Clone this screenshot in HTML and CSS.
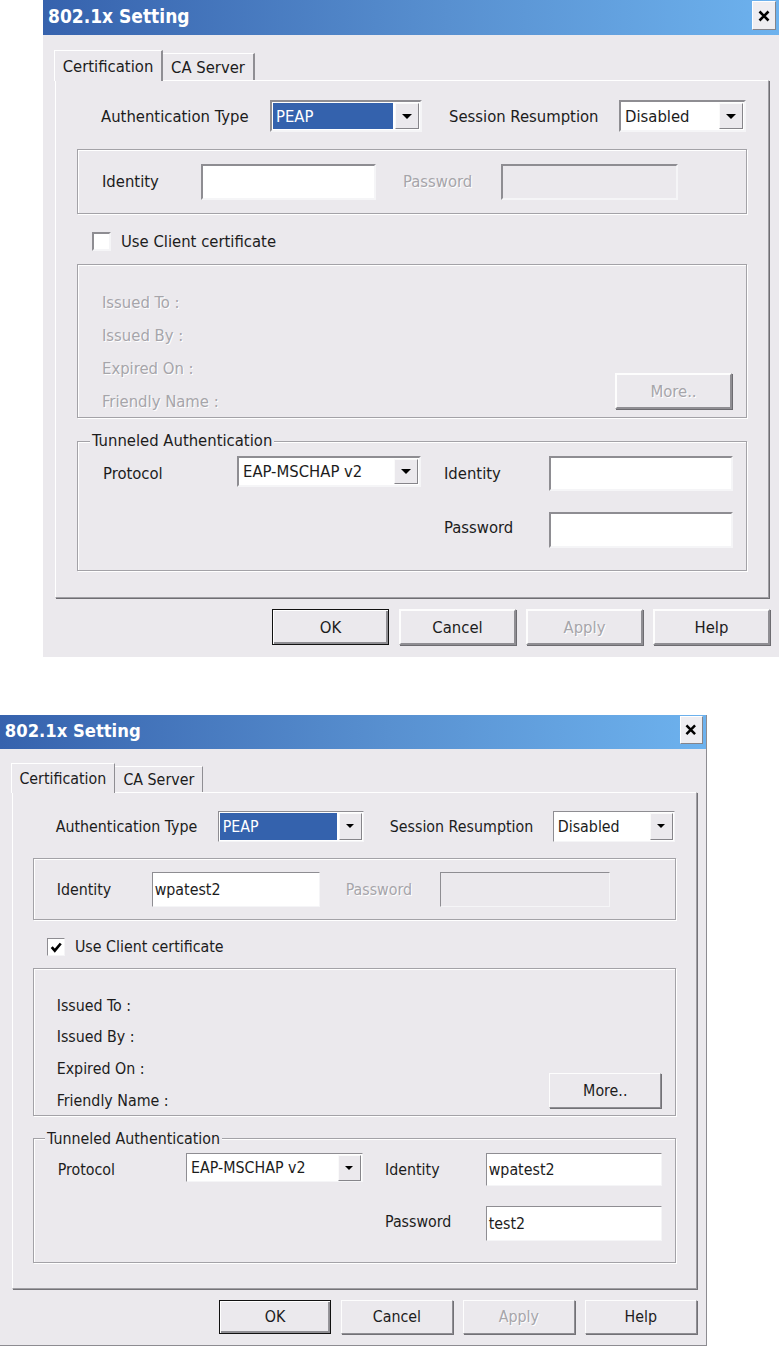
FILE: index.html
```html
<!DOCTYPE html>
<html lang="en">
  <head>
    <meta charset="UTF-8" />
    <meta name="viewport" content="width=device-width, initial-scale=1.0" />
    <title>802.1x Setting</title>
    <link rel="stylesheet" href="styles.css">
  </head>
  <body>
    <!-- first capture: empty form -->
    <div class="shot shot-top">
      <div class="dialog">
        <div class="titlebar">
          <span class="title">802.1x Setting</span>
          <span class="close">
            <svg width="12" height="12" viewBox="0 0 12 12"><path d="M1.5 1.5 L10.5 10.5 M10.5 1.5 L1.5 10.5" stroke="#000" stroke-width="2.6" /></svg>
          </span>
        </div>
        <div class="tabs">
          <div class="tab tab-active">Certification</div>
          <div class="tab">CA Server</div>
        </div>
        <div class="panel">
          <div class="row-auth">
            <span class="lbl-auth">Authentication Type</span>
            <div class="select select-peap">
              <span class="select-value select-value-hl">PEAP</span>
              <span class="select-btn"></span>
            </div>
            <span class="lbl-session">Session Resumption</span>
            <div class="select select-session">
              <span class="select-value">Disabled</span>
              <span class="select-btn"></span>
            </div>
          </div>

          <div class="group group-identity">
            <span class="lbl-identity">Identity</span>
            <div class="field field-identity"></div>
            <span class="lbl-password disabled">Password</span>
            <div class="field field-password field-disabled"></div>
          </div>

          <div class="check-row">
            <span class="checkbox"></span>
            <span>Use Client certificate</span>
          </div>

          <div class="group group-cert">
            <span class="cert-label disabled">Issued To :</span>
            <span class="cert-label disabled">Issued By :</span>
            <span class="cert-label disabled">Expired On :</span>
            <span class="cert-label disabled">Friendly Name :</span>
            <span class="btn btn-more disabled">More..</span>
          </div>

          <fieldset class="group group-tunnel">
            <legend>Tunneled Authentication</legend>
            <div class="tunnel-grid">
              <span>Protocol</span>
              <div class="select select-protocol">
                <span class="select-value">EAP-MSCHAP v2</span>
                <span class="select-btn"></span>
              </div>
              <span>Identity</span>
              <div class="field field-tunnel"></div>
              <span></span>
              <span></span>
              <span class="lbl-row2">Password</span>
              <div class="field field-tunnel field-tall"></div>
            </div>
          </fieldset>
        </div>
        <div class="buttons">
          <span class="btn btn-default">OK</span>
          <span class="btn">Cancel</span>
          <span class="btn disabled">Apply</span>
          <span class="btn">Help</span>
        </div>
      </div>
    </div>

    <!-- second capture: filled in -->
    <div class="shot shot-bottom">
      <div class="dialog dialog-small">
        <div class="titlebar">
          <span class="title">802.1x Setting</span>
          <span class="close">
            <svg width="12" height="12" viewBox="0 0 12 12"><path d="M1.5 1.5 L10.5 10.5 M10.5 1.5 L1.5 10.5" stroke="#000" stroke-width="2.6" /></svg>
          </span>
        </div>
        <div class="tabs">
          <div class="tab tab-active">Certification</div>
          <div class="tab">CA Server</div>
        </div>
        <div class="panel">
          <div class="row-auth">
            <span class="lbl-auth">Authentication Type</span>
            <div class="select select-peap">
              <span class="select-value select-value-hl">PEAP</span>
              <span class="select-btn"></span>
            </div>
            <span class="lbl-session">Session Resumption</span>
            <div class="select select-session">
              <span class="select-value">Disabled</span>
              <span class="select-btn"></span>
            </div>
          </div>

          <div class="group group-identity">
            <span class="lbl-identity">Identity</span>
            <div class="field field-identity">wpatest2</div>
            <span class="lbl-password disabled">Password</span>
            <div class="field field-password field-disabled"></div>
          </div>

          <div class="check-row">
            <span class="checkbox">
              <svg width="13" height="13" viewBox="0 0 13 13"><path d="M1.8 6.3 L5 10 L11.2 2.6" fill="none" stroke="#000" stroke-width="2.8" /></svg>
            </span>
            <span>Use Client certificate</span>
          </div>

          <div class="group group-cert">
            <span class="cert-label">Issued To :</span>
            <span class="cert-label">Issued By :</span>
            <span class="cert-label">Expired On :</span>
            <span class="cert-label">Friendly Name :</span>
            <span class="btn btn-more">More..</span>
          </div>

          <fieldset class="group group-tunnel">
            <legend>Tunneled Authentication</legend>
            <div class="tunnel-grid">
              <span>Protocol</span>
              <div class="select select-protocol">
                <span class="select-value">EAP-MSCHAP v2</span>
                <span class="select-btn"></span>
              </div>
              <span>Identity</span>
              <div class="field field-tunnel">wpatest2</div>
              <span></span>
              <span></span>
              <span class="lbl-row2">Password</span>
              <div class="field field-tunnel field-tall">test2</div>
            </div>
          </fieldset>
        </div>
        <div class="buttons">
          <span class="btn btn-default">OK</span>
          <span class="btn">Cancel</span>
          <span class="btn disabled">Apply</span>
          <span class="btn">Help</span>
        </div>
      </div>
    </div>
  </body>
</html>
```

FILE: styles.css
```css
/* 802.1x dialog, two captures of the same window */
html {
  overflow: hidden;
}

body {
  margin: 0;
  background: #fff;
  font-family: "DejaVu Sans Condensed", "DejaVu Sans", sans-serif;
  font-stretch: condensed;
  font-size: 16.5px;
  color: #1c1c1c;
}

.shot {
  display: flex;
}

.shot-top {
  padding-left: 43px;
}

.shot-bottom {
  padding-top: 58px;
}

.dialog {
  width: 736px;
  height: 657px;
  box-sizing: border-box;
  background: #ebe9ed;
  display: flex;
  flex-direction: column;
}

/* second capture is a bit smaller */
.dialog-small {
  zoom: 0.96;
  border-right: 2px solid #8d8c91;
  border-bottom: 2px solid #8d8c91;
}

/* title bar */
.titlebar {
  height: 35px;
  flex: none;
  display: flex;
  justify-content: space-between;
  align-items: flex-start;
  background: linear-gradient(to right, #3662ad, #5890d0 55%, #6db2ee);
}

.title {
  color: #fff;
  font-weight: bold;
  font-size: 19px;
  line-height: 33px;
  padding-left: 5px;
}

.close {
  width: 24px;
  height: 29px;
  margin: 1px 3px 0 0;
  box-sizing: border-box;
  background: #eeedf1;
  border: 1px solid;
  border-color: #fff #85848a #85848a #fff;
  display: flex;
  align-items: center;
  justify-content: center;
}

/* tabs */
.tabs {
  display: flex;
  align-items: flex-end;
  height: 30px;
  margin-top: 15px;
  padding-left: 11px;
  position: relative;
  z-index: 1;
}

.tab {
  width: 92px;
  height: 27px;
  box-sizing: border-box;
  border-top: 1px solid #fff;
  border-right: 2px solid #8f8e93;
  display: flex;
  align-items: center;
  justify-content: center;
  background: #ebe9ed;
  white-space: nowrap;
}

.tab-active {
  width: 109px;
  height: 31px;
  margin-bottom: -1px;
  border-left: 1px solid #fff;
}

.panel {
  margin-left: 12px;
  width: 714px;
  height: 518px;
  flex: none;
  box-sizing: border-box;
  border: 1px solid;
  border-color: #fff #a09fa4 #a09fa4 #fff;
  box-shadow: 1px 1px 0 #6f6e73;
}

/* first row */
.row-auth {
  display: flex;
  align-items: center;
  height: 32px;
  margin: 19px 0 0 45px;
}

.lbl-auth {
  width: 169px;
}

.lbl-session {
  width: 170px;
  margin-left: 27px;
}

/* combo boxes */
.select {
  display: flex;
  height: 32px;
  box-sizing: border-box;
  border: 2px solid;
  border-color: #8e8d92 #f5f5f7 #f5f5f7 #8e8d92;
  background: #fff;
  padding: 1px;
}

.select-peap {
  width: 152px;
}

.select-session {
  width: 127px;
}

.select-protocol {
  width: 184px;
  height: 31px;
}

.select-value {
  flex: 1;
  display: flex;
  align-items: center;
  padding-left: 3px;
  white-space: nowrap;
}

.select-value-hl {
  background: #3462ad;
  color: #fff;
}

.select-btn {
  width: 24px;
  flex: none;
  margin-left: 2px;
  box-sizing: border-box;
  background: #ebe9ed;
  border: 1px solid;
  border-color: #fafafa #86858a #86858a #fafafa;
  display: flex;
  align-items: center;
  justify-content: center;
}

.select-btn::after {
  content: "";
  border: 5px solid transparent;
  border-top-color: #000;
  border-bottom: 0;
}

/* group boxes */
.group {
  margin: 0 0 0 21px;
  width: 670px;
  box-sizing: border-box;
  border: 1px solid #a3a2a7;
  box-shadow: inset 1px 1px 0 #fff, 1px 1px 0 #fff;
}

.group-identity {
  height: 65px;
  margin-top: 17px;
  display: flex;
  align-items: center;
  padding-left: 24px;
}

.lbl-identity {
  width: 99px;
}

.lbl-password {
  width: 98px;
  margin-left: 27px;
}

/* edit fields */
.field {
  height: 36px;
  box-sizing: border-box;
  border: 2px solid;
  border-color: #8e8d92 #f5f5f7 #f5f5f7 #8e8d92;
  background: #fff;
  padding: 0 2px;
  display: flex;
  align-items: center;
}

.field-identity {
  width: 175px;
}

.field-password {
  width: 177px;
}

.field-disabled {
  background: transparent;
}

.field-tunnel {
  width: 184px;
  height: 35px;
}

.field-tall {
  height: 36px;
}

/* checkbox */
.check-row {
  display: flex;
  align-items: center;
  gap: 10px;
  height: 19px;
  margin: 18px 0 0 36px;
}

.checkbox {
  width: 19px;
  height: 19px;
  box-sizing: border-box;
  border: 2px solid;
  border-color: #8e8d92 #f5f5f7 #f5f5f7 #8e8d92;
  background: #fff;
  display: flex;
  align-items: center;
  justify-content: center;
}

/* certificate info */
.group-cert {
  height: 154px;
  margin-top: 13px;
  padding: 21px 14px 0 24px;
  display: grid;
  grid-template-columns: 1fr auto;
  grid-template-rows: repeat(4, 33px);
}

.cert-label {
  grid-column: 1;
  line-height: 33px;
}

.btn-more {
  grid-column: 2;
  grid-row: 3 / 5;
  align-self: end;
  margin-bottom: 9px;
  width: 118px;
}

/* tunneled authentication */
.group-tunnel {
  margin-top: 13px;
  padding: 5px 0 22px 12px;
  min-width: 0;
}

.group-tunnel legend {
  padding: 0 2px;
  line-height: 20px;
  background: #ebe9ed;
}

.tunnel-grid {
  margin-left: 13px;
  display: grid;
  grid-template-columns: 134px 207px 105px 184px;
  row-gap: 21px;
  align-items: center;
}

.tunnel-grid .select-protocol {
  align-self: start;
}

.lbl-row2 {
  margin-top: -5px;
}

/* push buttons */
.buttons {
  display: flex;
  justify-content: flex-end;
  gap: 10px;
  margin-top: 11px;
  padding-right: 9px;
}

.btn {
  width: 117px;
  height: 36px;
  box-sizing: border-box;
  border: 2px solid;
  border-color: #fdfdfd #8f8e93 #8f8e93 #fdfdfd;
  box-shadow: 1px 1px 0 #6d6c71;
  display: flex;
  align-items: center;
  justify-content: center;
}

.btn-default {
  border: 1px solid #111;
  box-shadow: inset 1px 1px 0 #fff, inset -2px -2px 0 #8f8e93;
}

.disabled {
  color: #a6a5aa;
  text-shadow: 1px 1px 0 #fff;
}
```
